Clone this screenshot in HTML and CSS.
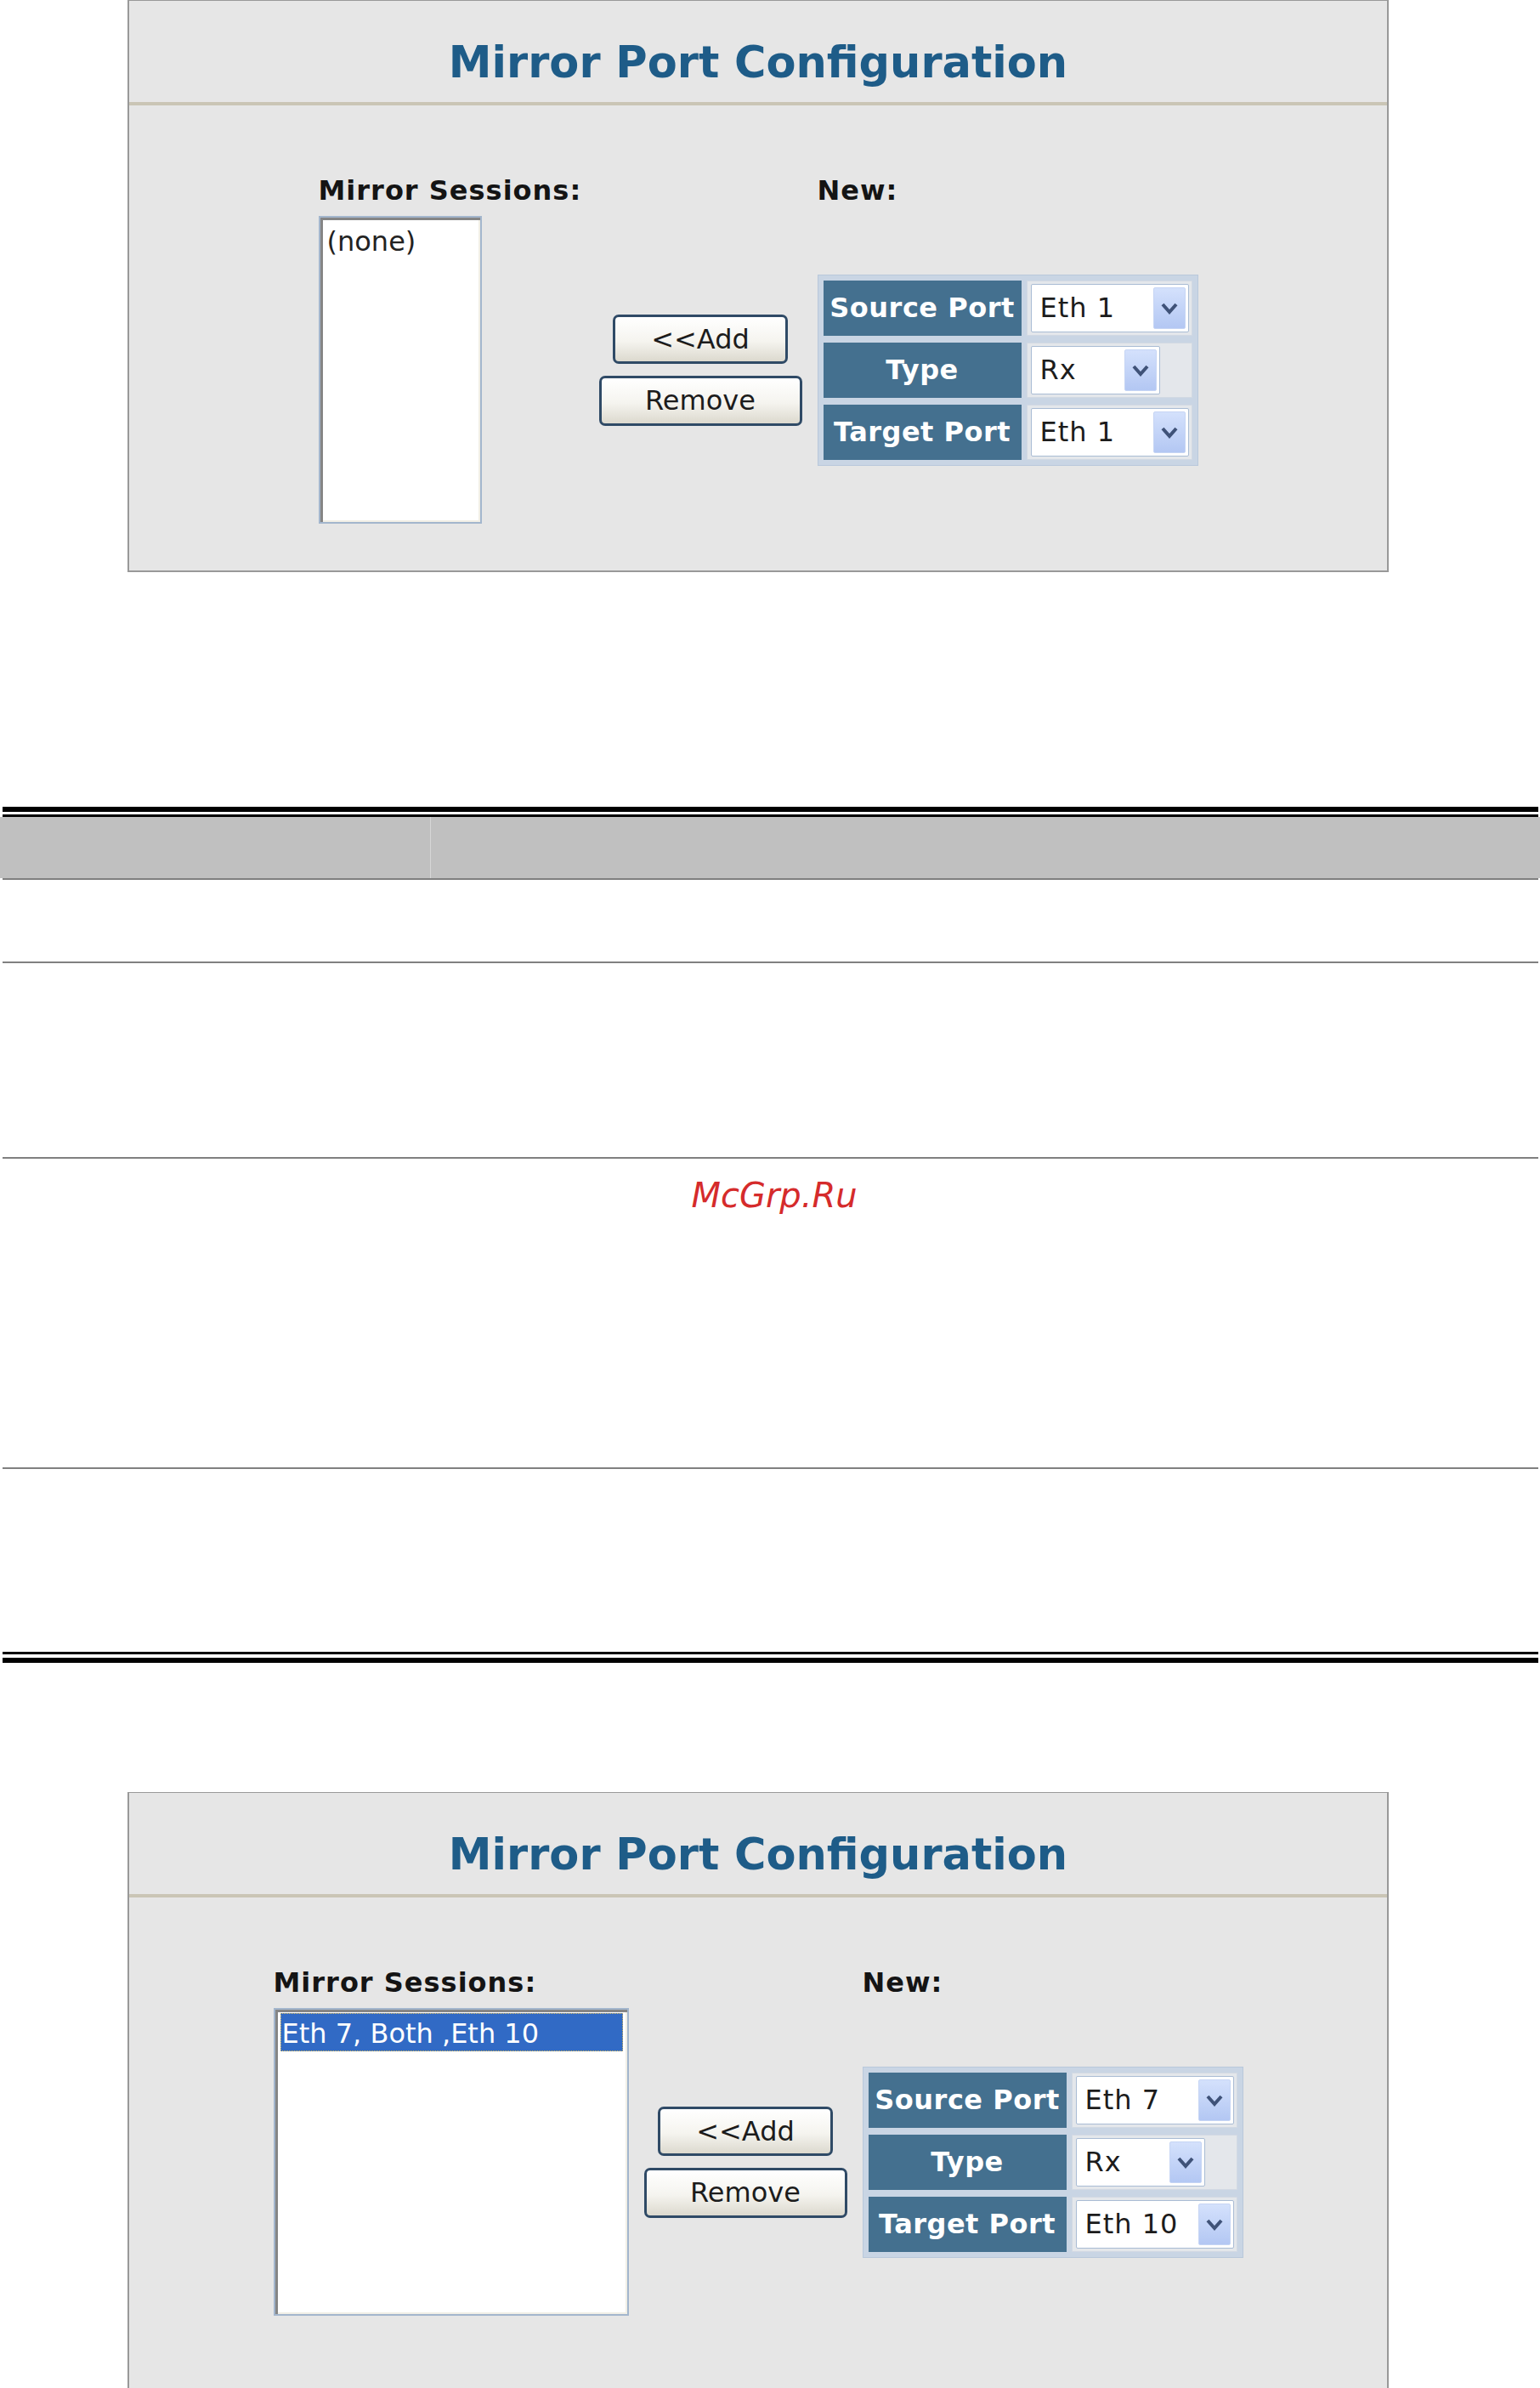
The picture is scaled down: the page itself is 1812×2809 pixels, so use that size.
FILE: index.html
```html
<!doctype html>
<html lang="en">
<head>
    <meta charset="UTF-8">
    <title>Mirror Port Configuration</title>
    <link rel="stylesheet" href="styles.css">
</head>
<body>
    <div class="panel">
        <h1 class="panel-title">Mirror Port Configuration</h1>
        <div class="mirror-form">
            <div class="form-label">Mirror Sessions:</div>
            <div></div>
            <div class="form-label">New:</div>
            <div class="session-list">
                <div class="session-item">(none)</div>
            </div>
            <div class="actions">
                <button class="btn btn-add">&lt;&lt;Add</button>
                <button class="btn btn-remove">Remove</button>
            </div>
            <div class="port-table">
                <div class="port-label">Source Port</div>
                <div class="port-value">
                    <div class="select select-wide">
                        <span class="select-text">Eth 1</span>
                        <span class="select-btn"><svg width="22" height="15" viewBox="0 0 22 15"><path d="M3 3 L11 12 L19 3" fill="none" stroke="#3f5278" stroke-width="4"/></svg></span>
                    </div>
                </div>
                <div class="port-label">Type</div>
                <div class="port-value">
                    <div class="select select-narrow">
                        <span class="select-text">Rx</span>
                        <span class="select-btn"><svg width="22" height="15" viewBox="0 0 22 15"><path d="M3 3 L11 12 L19 3" fill="none" stroke="#3f5278" stroke-width="4"/></svg></span>
                    </div>
                </div>
                <div class="port-label">Target Port</div>
                <div class="port-value">
                    <div class="select select-wide">
                        <span class="select-text">Eth 1</span>
                        <span class="select-btn"><svg width="22" height="15" viewBox="0 0 22 15"><path d="M3 3 L11 12 L19 3" fill="none" stroke="#3f5278" stroke-width="4"/></svg></span>
                    </div>
                </div>
            </div>
        </div>
    </div>

    <div class="desc">
        <div class="rule-thin"></div>
        <div class="desc-head">
            <div class="desc-col"></div>
            <div class="desc-col desc-col-right"></div>
        </div>
        <div class="desc-row row-1"></div>
        <div class="desc-row row-2"></div>
        <div class="desc-row row-3"><span class="watermark">McGrp.Ru</span></div>
        <div class="desc-row row-4"></div>
        <div class="rule-thin"></div>
        <div class="rule-thick"></div>
    </div>

    <div class="panel panel-cut">
        <h1 class="panel-title">Mirror Port Configuration</h1>
        <div class="mirror-form">
            <div class="form-label">Mirror Sessions:</div>
            <div></div>
            <div class="form-label">New:</div>
            <div class="session-list session-list-wide">
                <div class="session-item selected">Eth 7, Both ,Eth 10</div>
            </div>
            <div class="actions">
                <button class="btn btn-add">&lt;&lt;Add</button>
                <button class="btn btn-remove">Remove</button>
            </div>
            <div class="port-table">
                <div class="port-label">Source Port</div>
                <div class="port-value">
                    <div class="select select-wide">
                        <span class="select-text">Eth 7</span>
                        <span class="select-btn"><svg width="22" height="15" viewBox="0 0 22 15"><path d="M3 3 L11 12 L19 3" fill="none" stroke="#3f5278" stroke-width="4"/></svg></span>
                    </div>
                </div>
                <div class="port-label">Type</div>
                <div class="port-value">
                    <div class="select select-narrow">
                        <span class="select-text">Rx</span>
                        <span class="select-btn"><svg width="22" height="15" viewBox="0 0 22 15"><path d="M3 3 L11 12 L19 3" fill="none" stroke="#3f5278" stroke-width="4"/></svg></span>
                    </div>
                </div>
                <div class="port-label">Target Port</div>
                <div class="port-value">
                    <div class="select select-wide">
                        <span class="select-text">Eth 10</span>
                        <span class="select-btn"><svg width="22" height="15" viewBox="0 0 22 15"><path d="M3 3 L11 12 L19 3" fill="none" stroke="#3f5278" stroke-width="4"/></svg></span>
                    </div>
                </div>
            </div>
        </div>
    </div>
</body>
</html>
```

FILE: styles.css
```css
*{
    margin: 0;
    padding: 0;
    box-sizing: border-box;
}
body{
    background: #fff;
    font-family: "DejaVu Sans", Verdana, sans-serif;
    color: #141414;
}
/*** panel ***/
.panel{
    width: 1484px;
    margin-left: 150px;
    background: #e6e6e6;
    border: 2px solid #999;
    border-top-width: 1px;
}
.panel-cut{
    margin-top: 152px;
    border-bottom: 0;
}
.panel-title{
    height: 123px;
    padding-top: 44px;
    font-size: 51px;
    line-height: 58px;
    font-weight: bold;
    color: #1e5c88;
    text-align: center;
    border-bottom: 4px solid #cac5b5;
}
.mirror-form{
    display: grid;
    grid-template-columns: minmax(312px, max-content) 259px max-content;
    column-gap: 8px;
    row-gap: 11px;
    justify-content: center;
    align-items: center;
    padding: 81px 0 55px;
}
.panel-cut .mirror-form{
    padding-bottom: 87px;
}
.form-label{
    font-size: 32px;
    font-weight: bold;
    letter-spacing: 1px;
    white-space: nowrap;
}
/*** list ***/
.session-list{
    width: 192px;
    height: 362px;
    background: #fff;
    border: 2px solid #a3b6cd;
    box-shadow: inset 3px 3px 0 #858585, inset -2px -2px 0 #f1efe6;
    padding: 4px 5px 0 6px;
}
.session-list-wide{
    width: 418px;
}
.session-item{
    height: 45px;
    padding: 3px 0 0 2px;
    font-size: 32px;
    line-height: 42px;
    white-space: nowrap;
    color: #222;
}
.session-item.selected{
    background: #316ac5;
    color: #fff;
    outline: 1px dotted #d9b95a;
    outline-offset: -1px;
}
/*** buttons ***/
.actions{
    display: flex;
    flex-direction: column;
    align-items: center;
    gap: 14px;
}
.btn{
    height: 58px;
    font: inherit;
    font-size: 32px;
    color: #1c1c1c;
    background: linear-gradient(#ffffff, #f5f4ef 55%, #dcd9ce);
    border: 3px solid #2f4a66;
    border-radius: 7px;
}
.btn-add{
    width: 206px;
}
.btn-remove{
    width: 239px;
    height: 59px;
}
/*** new session table ***/
.port-table{
    display: grid;
    grid-template-columns: 233px 195px;
    grid-auto-rows: 65px;
    gap: 8px 6px;
    padding: 6px;
    background: #c9d5e4;
    border: 1px solid #b9c8db;
}
.port-label{
    display: flex;
    align-items: center;
    justify-content: center;
    background: #44708f;
    color: #fff;
    font-size: 32px;
    font-weight: bold;
    letter-spacing: 0.5px;
    white-space: nowrap;
}
.port-value{
    display: flex;
    align-items: center;
    background: #e4e7eb;
    border: 1px solid #d2d9e3;
}
.select{
    display: flex;
    align-items: center;
    height: 57px;
    margin-left: 4px;
    padding: 3px;
    background: #fff;
    border: 1px solid #a9bcd4;
    border-radius: 2px;
}
.select-wide{
    width: 186px;
}
.select-narrow{
    width: 152px;
}
.select-text{
    flex: 1;
    padding-left: 7px;
    font-size: 32px;
    letter-spacing: 1px;
    color: #1c1c1c;
    white-space: nowrap;
}
.select-btn{
    display: flex;
    align-items: center;
    justify-content: center;
    width: 38px;
    height: 100%;
    background: linear-gradient(#d4e1fc, #b3c7f3);
    border: 1px solid #c6d5f4;
    border-radius: 2px;
}
/*** description table ***/
.desc{
    margin: 276px 2px 0 3px;
    border-top: 6px solid #000;
}
.rule-thin{
    height: 3px;
    margin-top: 3px;
    background: #000;
}
.desc-head{
    display: flex;
    height: 72px;
    margin: 0 -2px 0 -3px;
    background: #c0c0c0;
}
.desc-col{
    width: 506px;
}
.desc-col-right{
    flex: 1;
    border-left: 1px solid #d6d6d6;
}
.desc-row{
    border-top: 2px solid #808080;
}
.row-1{
    height: 98px;
}
.row-2{
    height: 230px;
}
.row-3{
    height: 365px;
    padding: 20px 0 0 9px;
    text-align: center;
}
.row-4{
    height: 217px;
}
.desc .row-4 + .rule-thin{
    margin-top: 0;
}
.rule-thick{
    height: 6px;
    margin-top: 4px;
    background: #000;
}
.watermark{
    font-size: 40px;
    font-style: italic;
    color: #d52b2b;
}
```
